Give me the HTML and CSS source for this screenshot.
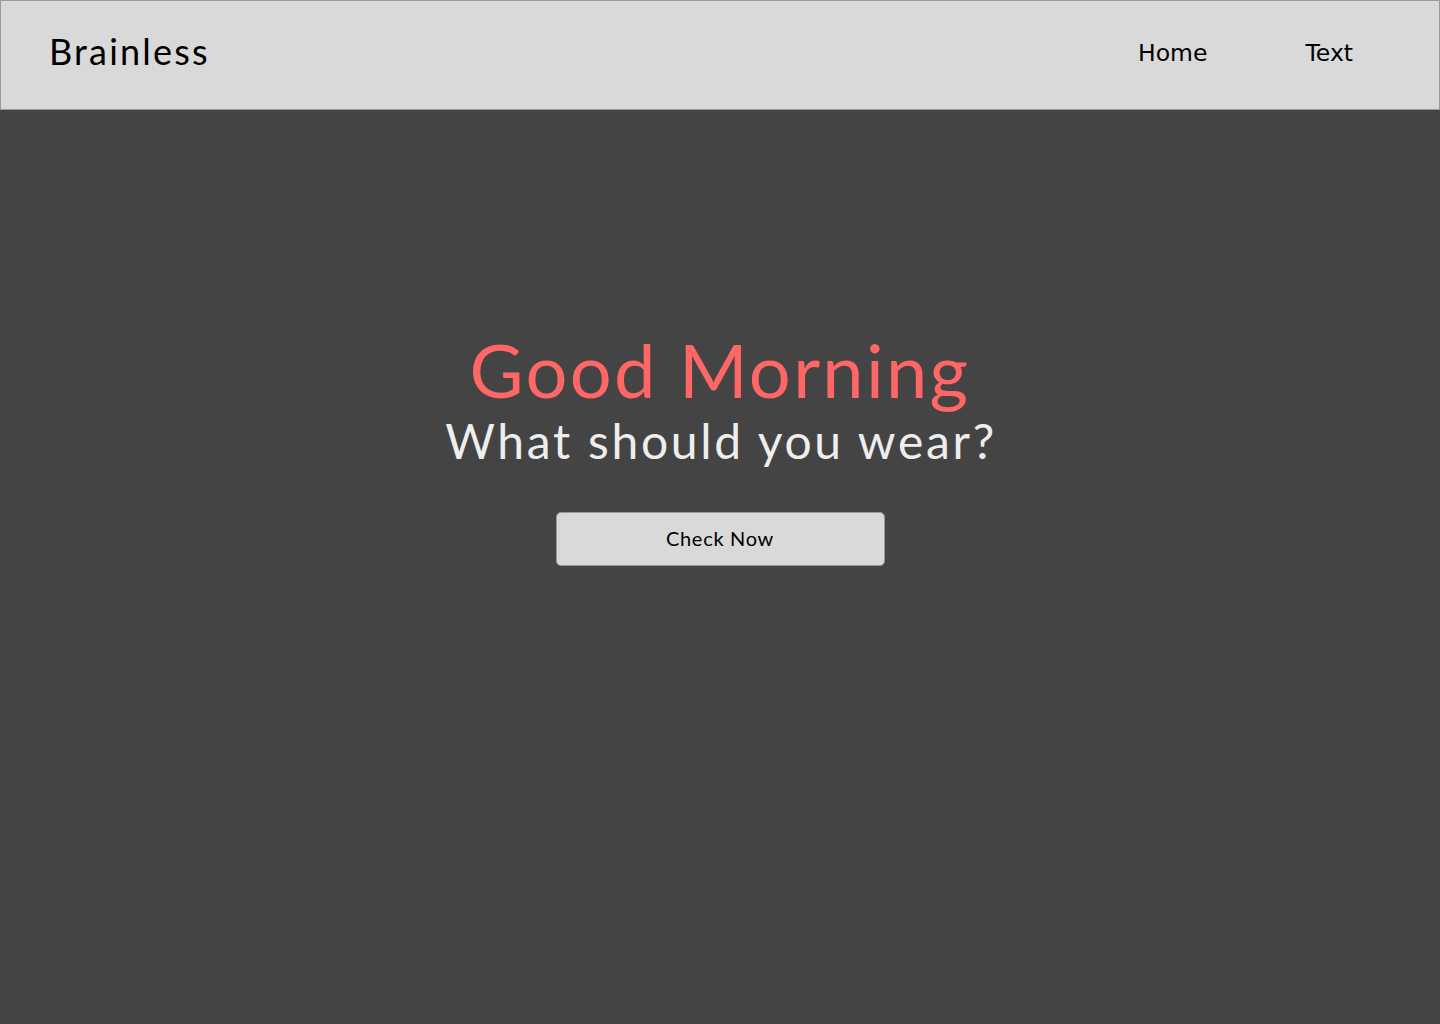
FILE: index.html
```html
<!DOCTYPE html>
<html>
<head>
<meta charset="utf-8">
<link rel="stylesheet" href="styles.css">
</head>
<body>
<header class="topbar">
  <div class="brand">Brainless</div>
  <nav class="nav">
    <a class="nav-link">Home</a>
    <a class="nav-link">Text</a>
  </nav>
</header>
<main class="hero">
  <h1 class="greeting">Good Morning</h1>
  <p class="question">What should you wear?</p>
  <button class="cta">Check Now</button>
</main>
</body>
</html>
```
FILE: styles.css
```css
html, body {
  margin: 0;
  padding: 0;
  height: 100%;
}
body {
  background: #444444;
  font-family: Lato, "Noto Sans", sans-serif;
}
.topbar {
  box-sizing: border-box;
  height: 110px;
  background: #d9d9d9;
  border: 1px solid #999999;
  display: flex;
  align-items: center;
  justify-content: space-between;
  padding: 0 86px 8px 48px;
}
.brand {
  font-size: 36px;
  letter-spacing: 2.2px;
  color: #000;
}
.nav {
  display: flex;
  gap: 98px;
  padding-top: 4px;
}
.nav-link {
  font-family: "DejaVu Sans", sans-serif;
  font-size: 23.5px;
  color: #000;
}
.hero {
  display: flex;
  flex-direction: column;
  align-items: center;
  padding-top: 220px;
}
.greeting {
  margin: 0;
  font-weight: normal;
  font-size: 74px;
  line-height: 80px;
  letter-spacing: 2.3px;
  color: #ff6666;
}
.question {
  margin: 0 0 0 2px;
  font-size: 48px;
  line-height: 62px;
  letter-spacing: 2.7px;
  color: #eeeeee;
}
.cta {
  margin-top: 40px;
  width: 329px;
  height: 54px;
  background: #d9d9d9;
  border: 1px solid #999999;
  border-radius: 5px;
  font-family: Lato, sans-serif;
  font-size: 20px;
  letter-spacing: 0.7px;
  color: #000;
  padding-bottom: 4px;
}
```
